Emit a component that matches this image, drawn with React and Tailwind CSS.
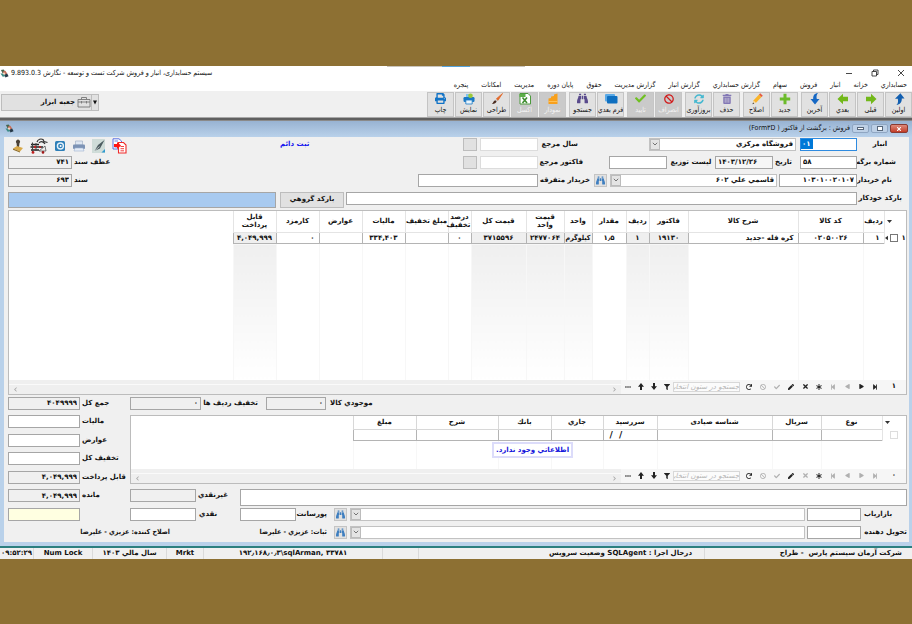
import {
  FaBinoculars, FaPrint, FaTrashAlt, FaSyncAlt, FaBan, FaCheck,
  FaStepForward, FaStepBackward, FaPlay, FaAsterisk, FaTimes, FaPen,
  FaRedo, FaFilter, FaEllipsisH, FaChevronDown,
} from "react-icons/fa";

const menus = [
  "حسابداري", "خزانه", "انبار", "فروش", "سهام", "گزارش حسابداري", "گزارش انبار",
  "گزارش مديريت", "حقوق", "پایان دوره", "مدیریت", "امكانات", "پنجره",
];

function CurvedArrow({ down }) {
  return (
    <svg viewBox="0 0 12 12" className="h-3 w-3">
      {down ? (
        <path d="M9 0 C5 0.6 4 3 4.2 6 H1.5 L6 11.5 L10.5 6 H7.8 C7.2 3.5 7.6 1.6 9 0Z" fill="#1668c4" />
      ) : (
        <path d="M3.4 12 C5.4 10.5 5.2 8 4.8 5.8 H2 L7.4 0.3 L11.5 5.4 H8.8 C9 8.8 7 11.5 3.4 12Z" fill="#125fb0" />
      )}
    </svg>
  );
}

function BlockArrow({ left }) {
  return (
    <svg viewBox="0 0 12 12" className={`h-3 w-3 ${left ? "rotate-180" : ""}`}>
      <path d="M1 3.8 H6 V0.8 L11.5 6 L6 11.2 V8.2 H1Z" fill="#72b81a" />
    </svg>
  );
}

function PlusIcon() {
  return (
    <svg viewBox="0 0 12 12" className="h-3 w-3">
      <path d="M4.5 0.8 H7.5 V4.5 H11.2 V7.5 H7.5 V11.2 H4.5 V7.5 H0.8 V4.5 H4.5Z" fill="#6cbb2b" />
    </svg>
  );
}

function PencilIcon() {
  return (
    <svg viewBox="0 0 12 12" className="h-3 w-3">
      <path d="M8 1.5 L10.5 4 L5 9.8 L2 10.5 L2.4 7.4Z" fill="#f9b42a" />
      <path d="M8 1.5 L9.2 0.3 L11.8 2.8 L10.5 4Z" fill="#e5573c" />
      <path d="M2 10.5 L2.4 7.4 L5 9.8Z" fill="#f3dcb4" />
      <path d="M1.4 11.2 L2.1 9.4 L3.2 10.4Z" fill="#333" />
    </svg>
  );
}

function ExcelIcon() {
  return (
    <svg viewBox="0 0 12 12" className="h-3 w-3">
      <path d="M1 0.5 H9 L11.5 3 V11 H1Z" fill="#fff" stroke="#4c9a3c" />
      <rect x="0.5" y="1" width="6" height="3" fill="#5cae48" />
      <path d="M3.5 4.5 L8 10 M8 4.5 L3.5 10" stroke="#3f8d30" strokeWidth="1.6" />
    </svg>
  );
}

function ChartIcon() {
  return (
    <svg viewBox="0 0 12 12" className="h-3 w-3">
      <path d="M1.5 5.5 L4 5 V3.5 L7 3 V1.5 L10.5 0.5 V11 H1.5Z" fill="#f8a01c" />
      <path d="M1.5 8.5 H10.5" stroke="#ffc864" strokeWidth="0.8" />
    </svg>
  );
}

function BrushIcon() {
  return (
    <svg viewBox="0 0 12 12" className="h-3 w-3">
      <path d="M11.5 0.5 L5.2 6 L6.8 7.6Z" fill="#e2682a" stroke="#e2682a" strokeWidth="0.8" />
      <path d="M5.2 6 L6.8 7.6 L5.6 8.6 L4.2 7.2Z" fill="#c9c9c9" />
      <path d="M4.2 7.2 L5.6 8.6 C5 10.5 3 11.2 0.8 11 C2.4 10 2.2 8 4.2 7.2Z" fill="#4a2c20" />
    </svg>
  );
}

function FormsIcon() {
  return (
    <svg viewBox="0 0 14 12" className="h-3 w-3.5">
      <rect x="1" y="1" width="10" height="7.5" rx="1" fill="#59a9e6" />
      <rect x="3" y="3" width="10.5" height="7.5" rx="1" fill="#0f6fc0" />
    </svg>
  );
}

function PreviewIcon() {
  return (
    <svg viewBox="0 0 12 12" className="h-3 w-3">
      <path d="M3 1 H9 V4 H3Z" fill="#7fc4ef" />
      <rect x="0.5" y="4" width="11" height="5" rx="1.2" fill="#1a78c4" />
      <path d="M2.8 7 H9.2 V11 H2.8Z" fill="#e8f4fc" stroke="#1a78c4" strokeWidth="0.8" />
      <circle cx="7.5" cy="2.8" r="2.3" fill="#9bc93a" />
    </svg>
  );
}

const toolGroups = [
  [
    { text: "اولین", icon: <CurvedArrow /> },
    { text: "قبلی", icon: <BlockArrow /> },
    { text: "بعدي", icon: <BlockArrow left /> },
    { text: "آخرین", icon: <CurvedArrow down /> },
  ],
  [
    { text: "جدید", icon: <PlusIcon /> },
    { text: "اصلاح", icon: <PencilIcon /> },
  ],
  [
    { text: "حذف", icon: <FaTrashAlt className="text-[#8277b5]" size={10} /> },
    { text: "بروزآوری", icon: <FaSyncAlt className="text-[#46b8d0]" size={10} /> },
  ],
  [
    { text: "انصراف", icon: <FaBan className="text-[#d01c1c]" size={10} />, off: true },
    { text: "تایید", icon: <FaCheck className="text-[#6fc021]" size={11} />, off: true },
  ],
  [
    { text: "فرم بعدي", icon: <FormsIcon /> },
    { text: "جستجو", icon: <FaBinoculars className="text-[#594a8c]" size={11} /> },
  ],
  [
    { text: "نمودار", icon: <ChartIcon />, off: true },
    { text: "اكسل", icon: <ExcelIcon />, off: true },
    { text: "طراحی", icon: <BrushIcon /> },
    { text: "نمایش", icon: <PreviewIcon /> },
    { text: "چاپ", icon: <FaPrint className="text-[#1173c6]" size={11} /> },
  ],
];

function ToolButton({ item }) {
  return (
    <button
      type="button"
      disabled={item.off}
      className={`flex h-[25px] w-[27px] flex-col items-center overflow-hidden whitespace-nowrap border text-[7px] leading-[10px] ${
        item.off ? "border-[#c6c6c6] bg-[#cacaca] text-[#f4f4f4]" : "border-[#c4c4c4] bg-[#e1e1e1] text-[#111]"
      }`}
    >
      <span className="flex h-3 items-center">{item.icon}</span>
      <span>{item.text}</span>
    </button>
  );
}

function AppLogo() {
  return (
    <svg viewBox="0 0 10 10" className="h-[9px] w-[9px] shrink-0">
      <path d="M1 1 L4 0.5 L6 3 L3 5Z" fill="#46644e" />
      <path d="M3 3 L6 2 L8 5 L5 7Z" fill="#c9705c" />
      <path d="M0.5 5 L4 5 L6 8 L3 8.5Z" fill="#3d8c86" />
      <path d="M5 6 L8 5 L9.5 8 L6 9.5Z" fill="#263948" />
      <path d="M3 4.5 L5 4 L6 6 L4 6.5Z" fill="#f0dcc8" />
    </svg>
  );
}

function Input({ id, value, className = "", ltr }) {
  return (
    <input
      id={id}
      type="text"
      dir={ltr ? "ltr" : "rtl"}
      defaultValue={value}
      className={`h-[13px] shrink-0 rounded-none border border-[#a6a6a6] px-0.5 leading-[11px] outline-none ${className}`}
    />
  );
}

function Label({ id, children, className = "" }) {
  return (
    <label htmlFor={id} className={`shrink-0 whitespace-nowrap ${className}`}>
      {children}
    </label>
  );
}

function Select({ id, value, label, className = "" }) {
  return (
    <div className={`relative h-[13px] border border-[#c2c2c2] bg-white ${className}`}>
      <select
        id={id}
        aria-label={label}
        className="block h-full w-full appearance-none bg-transparent pr-0.5 pl-3 leading-[11px] outline-none"
      >
        <option>{value}</option>
      </select>
      <span className="pointer-events-none absolute inset-y-0 left-0 flex w-2.5 items-center justify-center border border-[#bcbcbc] bg-[#e4e4e4] text-[#666]">
        <svg viewBox="0 0 6 4" className="h-1 w-1.5">
          <path d="M0.8 0.8 L3 3 L5.2 0.8" fill="none" stroke="currentColor" strokeWidth="0.9" />
        </svg>
      </span>
    </div>
  );
}

function FindButton({ label }) {
  return (
    <button
      type="button"
      aria-label={label}
      className="flex h-[13px] w-[13px] shrink-0 items-center justify-center border border-[#c4c4c4] bg-[#e1e1e1] text-[#3f7fc0]"
    >
      <FaBinoculars size={9} />
    </button>
  );
}

function DocIcons() {
  return (
    <div dir="ltr" className="mt-1 ml-1 flex h-4 items-center gap-1.5">
      <button type="button" aria-label="مهر">
        <svg viewBox="0 0 12 14" className="h-3.5 w-3">
          <path d="M4.5 4 A2 2 0 1 1 7.5 4 L7 8 H5Z" fill="#4a4136" />
          <path d="M1 9.5 L5 7 L11 9 L8 12.5Z" fill="#d8a94a" />
          <path d="M1 9.5 L8 12.5 V13.5 L1 10.8Z" fill="#8c6a24" />
        </svg>
      </button>
      <button type="button" aria-label="حمل">
        <svg viewBox="0 0 18 16" className="h-4 w-[18px]">
          <path d="M1 6.5 H9 M0.5 9 H13 M1 12 H9" stroke="#222" strokeWidth="1.3" />
          <path d="M2.5 4.5 V14 M6 5 V13" stroke="#444" strokeWidth="1" />
          <path d="M7 4 C8 1 11 0.5 13 1.5 L14 3.5 L17.5 4.5 M9 5 C11 2.5 14 4 15 6" fill="none" stroke="#333" strokeWidth="1.2" />
          <path d="M9 13 L15 8 L16 13Z" fill="#eee" stroke="#555" strokeWidth="0.8" />
          <circle cx="3" cy="14.4" r="1.4" fill="#c02020" />
          <circle cx="13" cy="14.4" r="1.3" fill="#a01818" />
          <circle cx="5" cy="9" r="1.2" fill="#c02020" />
          <circle cx="10" cy="9" r="1.1" fill="#c02020" />
        </svg>
      </button>
      <button type="button" aria-label="پشتیبان">
        <svg viewBox="0 0 12 12" className="h-3 w-3">
          <rect x="1" y="1" width="10" height="10" rx="1.5" fill="#2e7fb8" />
          <circle cx="6.4" cy="6" r="3" fill="none" stroke="#e4f1fa" strokeWidth="1.4" />
          <circle cx="6.6" cy="6" r="1" fill="#fff" />
        </svg>
      </button>
      <button type="button" aria-label="چاپ سند">
        <svg viewBox="0 0 14 12" className="h-3 w-3.5">
          <path d="M3.5 1 H10.5 V5 H3.5Z" fill="#dfe7f2" stroke="#9aa9c0" strokeWidth="0.6" />
          <rect x="1" y="4.6" width="12" height="4.4" rx="1" fill="#7d93b5" />
          <path d="M3 8 H11 L12 11 H2Z" fill="#e6edf7" stroke="#9fb3d1" strokeWidth="0.6" />
        </svg>
      </button>
      <button type="button" aria-label="امضا">
        <svg viewBox="0 0 14 14" className="h-3.5 w-3.5">
          <rect width="13" height="14" fill="#cfdcd8" />
          <path d="M12.5 1 L6 6 L2.5 12 L8 9.5 Z" fill="#4c5c60" />
          <path d="M2.5 12 L7.5 7.5" stroke="#fff" strokeWidth="0.6" />
          <path d="M9.5 13.5 L13 10 V13.5Z" fill="#2e9ad0" />
        </svg>
      </button>
      <button type="button" aria-label="خروجی">
        <svg viewBox="0 0 15 16" className="h-4 w-[15px]">
          <path d="M1 0.8 H7 L9.5 3 V11 H1Z" fill="#fff" stroke="#4a62e0" strokeWidth="0.9" />
          <path d="M2.5 3 H6 M2.5 9 H6" stroke="#4a62e0" strokeWidth="0.8" />
          <path d="M6.5 4.5 H11.5 L14 7 V15 H6.5Z" fill="#fff" stroke="#ef2b2b" strokeWidth="1.1" />
          <path d="M8.5 8.5 H12 M8.5 10.7 H12 M8.5 12.8 H12" stroke="#ef2b2b" strokeWidth="0.9" />
          <path d="M2 6 H5 V4 L9 7.5 L5 11 V9 H2Z" fill="#ff1414" />
        </svg>
      </button>
    </div>
  );
}

function SortMark() {
  return (
    <svg viewBox="0 0 5 3" className="ml-0.5 inline h-[3px] w-[5px]">
      <path d="M0 0 H5 L2.5 3Z" fill="#333" />
    </svg>
  );
}

const columns = [
  { title: "رديف", width: "w-[21px]", value: "۱" },
  { title: "كد كالا", width: "w-[65px]", value: "۰۲۰۵۰۰۲۶", center: true },
  { title: "شرح كالا", width: "w-[110px]", value: "كره فله -جدید" },
  { title: "فاكتور", width: "w-[39px]", value: "۱۹۱۳۰", center: true, gray: true },
  { title: "ردیف", width: "w-[23px]", value: "۱", center: true, gray: true },
  { title: "مقدار", width: "w-[34px]", value: "۱٫۵", center: true },
  { title: "واحد", width: "w-[28px]", value: "كيلوگرم", unit: true, gray: true },
  { title: "قیمت واحد", width: "w-[38px]", value: "۲۴۷۷۰۶۴", center: true, gray: true },
  { title: "قیمت كل", width: "w-[55px]", value: "۳۷۱۵۵۹۶", center: true, gray: true },
  { title: "درصد تخفیف", width: "w-[23px]", value: "۰", center: true },
  { title: "مبلغ تخفیف", width: "w-[43px]", value: "", nowrap: true },
  { title: "ماليات", width: "w-[43px]", value: "۳۳۴,۴۰۳", center: true },
  { title: "عوارض", width: "w-[43px]", value: "" },
  { title: "كارمزد", width: "w-[43px]", value: "۰" },
  { title: "قابل پرداخت", width: "w-[43px]", value: "۴,۰۴۹,۹۹۹", center: true, gray: true },
];

function ItemsTable() {
  return (
    <table className="w-full table-fixed border-collapse bg-white">
      <thead>
        <tr className="h-[22px]">
          <th className="w-[22px] border-l border-[#e4e4e4] text-left">
            <SortMark />
          </th>
          {columns.map((c, i) => (
            <th key={i} className={`border-l border-[#e4e4e4] leading-[8px] ${c.width} ${c.nowrap ? "whitespace-nowrap" : ""}`}>
              {c.title}
            </th>
          ))}
          <th></th>
        </tr>
      </thead>
      <tbody>
        <tr className="h-[11px]">
          <td className="border-l border-[#e4e4e4]">
            <div className="flex items-center justify-end gap-0.5">
              <span className="ml-0.5 leading-[10px]">۱</span>
              <input type="checkbox" aria-label="انتخاب ردیف ۱" className="h-2 w-2 appearance-none border border-[#777] bg-white" />
              <svg viewBox="0 0 4 6" className="h-1.5 w-[3px]"><path d="M4 0 L0 3 L4 6Z" fill="#333" /></svg>
            </div>
          </td>
          {columns.map((c, i) => (
            <td
              key={i}
              className={`overflow-hidden whitespace-nowrap border-t border-b border-l border-t-[#e4e4e4] border-b-[#b4b4b4] border-l-[#b4b4b4] leading-[9px] ${
                c.gray ? "bg-[#efefef]" : ""
              } ${
                c.center
                  ? "text-center"
                  : c.unit
                  ? "text-center font-['DejaVu_Sans_Condensed','DejaVu_Sans',sans-serif]"
                  : "px-1 text-right"
              }`}
            >
              {c.value}
            </td>
          ))}
          <td></td>
        </tr>
        <tr className="h-[136px]">
          <td></td>
          {columns.map((c, i) => (
            <td key={i} className={`border-l border-[#f7f7f7] ${c.gray ? "bg-linear-to-b from-[#efefef] to-white" : ""}`}></td>
          ))}
          <td></td>
        </tr>
      </tbody>
    </table>
  );
}

function SmallArrow({ up }) {
  return (
    <svg viewBox="0 0 6 7" className={`h-[7px] w-1.5 ${up ? "rotate-180" : ""}`}>
      <path d="M2 0 H4 V3.2 H6 L3 7 L0 3.2 H2Z" fill="currentColor" />
    </svg>
  );
}

function NavBar({ count, active, id }) {
  const on = "text-[#222]";
  const off = "text-[#b0b0b0]";
  const nav = active ? on : off;
  const btn = "flex w-3.5 shrink-0 items-center justify-center";
  const sideBtn = "flex w-[13px] shrink-0 items-center justify-center text-[#222]";
  return (
    <div className="flex h-[14px] bg-[#efefef]">
      <div className="flex shrink-0 items-center bg-[#f6f6f6]">
        <span className="w-6 shrink-0 text-center">{count}</span>
        <button type="button" aria-label="آخرین رکورد" className={`${btn} ${nav}`}><FaStepForward size={6} /></button>
        <button type="button" aria-label="رکورد بعد" className={`${btn} ${nav}`}><FaPlay size={5} /></button>
        <button type="button" aria-label="رکورد قبل" className={`${btn} ${off}`}><FaPlay size={5} className="rotate-180" /></button>
        <button type="button" aria-label="اولین رکورد" className={`${btn} ${off}`}><FaStepBackward size={6} /></button>
        <button type="button" aria-label="افزودن" className={`${btn} ${on}`}><FaAsterisk size={6} /></button>
        <button type="button" aria-label="حذف" className={`${btn} ${nav}`}><FaTimes size={7} /></button>
        <button type="button" aria-label="ویرایش" className={`${btn} ${on}`}><FaPen size={6} /></button>
        <button type="button" aria-label="ثبت" className={`${btn} ${off}`}><FaCheck size={6} /></button>
        <button type="button" aria-label="لغو" className={`${btn} ${off}`}><FaBan size={6} /></button>
        <button type="button" aria-label="تازه‌سازی" className={`${btn} ${on}`}><FaRedo size={6} /></button>
        <input
          id={id}
          type="text"
          aria-label="جستجو"
          placeholder="جستجو در ستون انتخابی"
          className="mr-0.5 h-[10px] w-[67px] shrink-0 border border-[#d8d8d8] bg-[#fbfbfb] text-[7px] font-normal italic leading-[8px] placeholder-[#b5b5b5] outline-none"
        />
        <button type="button" aria-label="فیلتر" className={sideBtn}><FaFilter size={6} /></button>
        <button type="button" aria-label="پایین" className={sideBtn}><SmallArrow /></button>
        <button type="button" aria-label="بالا" className={sideBtn}><SmallArrow up /></button>
        <button type="button" aria-label="بیشتر" className={sideBtn}><FaEllipsisH size={6} /></button>
      </div>
      <div className="mt-1 flex flex-1 items-center justify-between border-t border-[#fafafa] px-1 text-[#a8a8a8]">
        <FaChevronDown size={5} className="-rotate-90" />
        <FaChevronDown size={5} className="rotate-90" />
      </div>
    </div>
  );
}

const payColumns = [
  { title: "نوع", width: "w-[61px]" },
  { title: "سریال", width: "w-[49px]" },
  { title: "شناسه صیادی", width: "w-[115px]" },
  { title: "سررسيد", width: "w-[54px]", value: "/  /" },
  { title: "جاري", width: "w-[52px]" },
  { title: "بانك", width: "w-[53px]" },
  { title: "شرح", width: "w-[82px]" },
  { title: "مبلغ", width: "w-[63px]" },
];

function PaymentsTable() {
  return (
    <div className="relative">
      <table className="w-full table-fixed border-collapse bg-white">
        <thead>
          <tr className="h-[14px]">
            <th className="w-[24px] border-l border-[#e4e4e4] text-left"><SortMark /></th>
            {payColumns.map((c) => (
              <th key={c.title} className={`border-l border-[#d8d8d8] leading-[10px] ${c.width}`}>{c.title}</th>
            ))}
            <th></th>
          </tr>
        </thead>
        <tbody>
          <tr className="h-[11px]">
            <td className="border-l border-[#e4e4e4]">
              <input type="checkbox" aria-label="انتخاب" className="mx-auto block h-2 w-2 appearance-none border border-[#ddd] bg-white" />
            </td>
            {payColumns.map((c) => (
              <td key={c.title} className="border-t border-b border-l border-t-[#d8d8d8] border-b-[#b4b4b4] border-l-[#b4b4b4] pl-1.5 text-left text-[9px] leading-[9px] whitespace-pre">
                {c.value}
              </td>
            ))}
            <td></td>
          </tr>
          <tr className="h-[28px]">
            <td></td>
            {payColumns.map((c) => <td key={c.title} className="border-l border-[#f7f7f7]"></td>)}
            <td></td>
          </tr>
        </tbody>
      </table>
      <p className="absolute top-[26px] left-[361px] border-2 border-[#dcdcfa] bg-white px-0.5 leading-[12px] whitespace-nowrap text-[#1414dc]">
        اطلاعاتي وجود ندارد.
      </p>
    </div>
  );
}

const totals = [
  { id: "sum", label: "جمع كل", value: "۴۰۴۹۹۹۹", tint: "bg-[#f0f0f0]" },
  { id: "tax", label: "ماليات", tint: "bg-white" },
  { id: "duty", label: "عوارض", tint: "bg-white" },
  { id: "discount", label: "تخفيف كل", tint: "bg-white" },
  { id: "payable", label: "قابل پرداخت", value: "۴,۰۴۹,۹۹۹", tint: "bg-[#f0f0f0]" },
  { id: "remain", label: "مانده", value: "۴,۰۴۹,۹۹۹", tint: "bg-[#f0f0f0]" },
  { id: "note", label: "", tint: "bg-[#ffffe1]" },
];

function HeaderForm() {
  return (
    <form className="flex flex-col gap-[5px] pt-px pr-[5px] pl-1">
      <div className="flex h-[13px] items-center">
        <Label id="store" className="w-[47px] pr-1 pl-1 text-left">
          <span className="ml-px inline-block w-9 text-center">انبار</span>
        </Label>
        <div className="flex h-[13px] w-[57px] shrink-0 items-center justify-end border border-[#2f8be0] bg-white">
          <input id="store" dir="ltr" defaultValue="۰۱" className="w-3 bg-[#0078d7] px-px leading-[10px] text-white outline-none" />
        </div>
        <Select id="storeName" label="نام انبار" value="فروشگاه مركزي" className="mr-1 w-[147px] shrink-0" />
        <Label id="refYear" className="mr-[71px] w-[40px]">سال مرجع</Label>
        <Input id="refYear" className="w-[58px] border-[#dcdcdc] bg-white" />
        <button type="button" aria-label="انتخاب سال" className="mr-[3px] h-[13px] w-3.5 shrink-0 border border-[#bdbdbd] bg-[#e1e1e1]"></button>
        <div className="flex-1"></div>
        <a href="#" className="ml-[153px] shrink-0 text-[#1414ee]">ثبت دائم</a>
        <DocIcons />
      </div>
      <div className="flex h-[13px] items-center">
        <Label id="sheet" className="w-[47px] pr-2">شماره برگه</Label>
        <Input id="sheet" value="۵۸" ltr className="w-[57px] bg-white" />
        <Label id="date" className="w-[27px] pl-0.5 text-left">تاریخ</Label>
        <Input id="date" value="۱۴۰۳/۱۲/۲۶" ltr className="w-[58px] bg-[#f6f6f6]" />
        <Label id="dist" className="w-[48px] text-center">ليست توزيع</Label>
        <Input id="dist" className="w-[58px] bg-white" />
        <Label id="refInv" className="mr-[26px] w-[45px]">فاكتور مرجع</Label>
        <Input id="refInv" className="w-[58px] border-[#dcdcdc] bg-white" />
        <button type="button" aria-label="انتخاب فاکتور" className="mr-[3px] h-[13px] w-3.5 shrink-0 border border-[#bdbdbd] bg-[#e1e1e1]"></button>
        <div className="flex-1"></div>
        <Label id="docRef" className="ml-0.5">عطف سند</Label>
        <Input id="docRef" value="۷۴۱" className="w-16 bg-[#f0f0f0]" />
      </div>
      <div className="flex h-[13px] items-center">
        <Label id="buyer" className="w-[47px] pr-3">نام خريدار</Label>
        <Input id="buyer" value="۱۰۳۰۱۰۰۲۰۱۰۷" className="w-[78px] bg-white" />
        <Select id="buyerName" label="نام خریدار" value="قاسمي علي ۶۰۲" className="mr-0.5 w-[167px] shrink-0" />
        <div className="mr-[3px]"><FindButton label="جستجوی خریدار" /></div>
        <Label id="misc" className="mr-1 w-[52px]">خریدار متفرقه</Label>
        <Input id="misc" className="w-[120px] bg-white" />
        <div className="flex-1"></div>
        <Label id="doc" className="ml-0.5">سند</Label>
        <Input id="doc" value="۶۹۳" className="w-16 bg-[#f0f0f0]" />
      </div>
      <div className="flex h-[16px] items-start">
        <Label id="barcode" className="w-[47px] pr-0.5 leading-[13px]">باركد خودكار</Label>
        <Input id="barcode" className="flex-1 bg-white" />
        <button type="button" className="mr-0.5 h-[16px] w-16 shrink-0 border border-[#bdbdbd] bg-[#e1e1e1]">باركد گروهي</button>
        <input type="text" aria-label="بارکد" className="mr-1 h-[16px] w-[268px] shrink-0 border border-[#a6a6a6] bg-[#a8caf0] outline-none" />
      </div>
    </form>
  );
}

function StatusBar() {
  const cell = "shrink-0 border-r border-[#dadada] text-center whitespace-nowrap";
  return (
    <footer className="flex h-[11px] items-center bg-[#f0f0f0] leading-[11px]">
      <span className="w-[207px] shrink-0 pr-2.5">شركت آرمان سيستم پارس&nbsp; - طراح</span>
      <span className="flex-1 border-r border-[#dadada] pr-3">درحال اجرا : SQLAgent وضعيت سرويس</span>
      <span className={`${cell} h-full w-9`}></span>
      <span dir="ltr" className={`${cell} w-[179px]`}>۱۹۲٫۱۶۸٫۰٫۳\sqlArman, ۳۳۷۸۱</span>
      <span className={`${cell} w-[37px]`}>Mrkt</span>
      <span className={`${cell} w-[74px]`}>سال مالي ۱۴۰۳</span>
      <span className={`${cell} w-[59px]`}>Num Lock</span>
      <span className={`${cell} w-[34px]`}>۰۹:۵۲:۲۹</span>
    </footer>
  );
}

export default function App() {
  return (
    <div className="flex min-h-screen flex-col justify-center bg-[#8d7033]">
      <div dir="rtl" className="bg-[#f0f0f0] font-['DejaVu_Sans',sans-serif] text-[7px] font-bold text-[#111]">
        <header className="bg-white font-['DejaVu_Sans_Condensed','DejaVu_Sans',sans-serif] font-normal">
          <div className="flex h-px justify-center">
            <span className="w-[55px] bg-[#c9c4bb]"></span>
            <span className="w-7 bg-[#55a3dc]"></span>
            <span className="w-[55px] bg-[#c9c4bb]"></span>
          </div>
          <div className="flex h-[13px] items-center">
            <div className="flex items-center gap-4 pr-[7px] text-[#333]">
              <button type="button" aria-label="بستن">
                <svg viewBox="0 0 8 8" className="h-2 w-2"><path d="M1 1 L7 7 M7 1 L1 7" stroke="currentColor" strokeWidth="0.9" /></svg>
              </button>
              <button type="button" aria-label="بازگرداندن" className="pr-0.5">
                <svg viewBox="0 0 8 8" className="h-2 w-2"><path d="M1 2.5 H5.5 V7 H1Z M2.5 2.5 V1 H7 V5.5 H5.5" fill="none" stroke="currentColor" strokeWidth="0.9" /></svg>
              </button>
              <button type="button" aria-label="کوچک کردن" className="pr-0.5">
                <svg viewBox="0 0 8 8" className="h-2 w-2"><path d="M1 4.5 H7" stroke="currentColor" strokeWidth="0.9" /></svg>
              </button>
            </div>
            <h1 className="mr-auto ml-0.5">سیستم حسابداری، انبار و فروش شرکت تست و توسعه - نگارش 9.893.0.3</h1>
            <AppLogo />
          </div>
          <nav className="flex h-[11px] items-center gap-[13px] pr-[5px] leading-[11px]">
            {menus.map((m) => (
              <a key={m} href="#" className="whitespace-nowrap">{m}</a>
            ))}
          </nav>
        </header>

        <div className="flex items-center justify-between pt-px">
          <div className="flex gap-[3px] font-['DejaVu_Sans_Condensed','DejaVu_Sans',sans-serif] font-normal">
            {toolGroups.map((g, i) => (
              <div key={i} className="flex gap-px">
                {g.map((t) => <ToolButton key={t.text} item={t} />)}
              </div>
            ))}
          </div>
          <button type="button" className="mb-1 ml-px flex h-[17px] w-[98px] items-center border border-[#bdbdbd] bg-[#e1e1e1]">
            <span className="flex h-full w-[7px] items-center justify-center border-l border-[#bdbdbd]">
              <svg viewBox="0 0 5 5" className="h-[5px] w-1"><path d="M0 0 H5 L2.5 5Z" fill="#111" /></svg>
            </span>
            <svg viewBox="0 0 14 12" className="h-3 w-3.5">
              <path d="M1 3.5 H13 V11 H1Z M4.5 3.5 V1.5 H9.5 V3.5 M1 6 H13 M4.5 5 V7.5 M9.5 5 V7.5" fill="none" stroke="#777" strokeWidth="0.9" />
            </svg>
            <span className="mr-0.5">جعبه ابزار</span>
          </button>
        </div>
        <div className="h-1 border-t border-b border-t-[#a8a8a8] border-b-[#8a8a8a] bg-[#606060]"></div>

        <section className="bg-[#b9d1ea] pb-1">
          <div className="flex h-4 items-center bg-linear-to-b from-[#98b3d2] to-[#b9d1ea] pr-1 pl-[5px] font-['DejaVu_Sans_Condensed','DejaVu_Sans',sans-serif] font-normal">
            <button type="button" aria-label="بستن فرم" className="flex h-[9px] w-[18px] items-center justify-center rounded-xs border border-[#8a3a32] bg-linear-to-b from-[#dd8a7c] to-[#c23a26] text-white">
              <FaTimes size={6} />
            </button>
            <button type="button" aria-label="بزرگ کردن فرم" className="mr-0.5 flex h-[9px] w-[17px] items-center justify-center rounded-xs border border-[#8fa6c2] bg-[#bdd0e6]">
              <span className="h-[5px] w-1.5 border border-[#57677a] bg-white"></span>
            </button>
            <button type="button" aria-label="کوچک کردن فرم" className="mr-0.5 flex h-[9px] w-[17px] items-center justify-center rounded-xs border border-[#8fa6c2] bg-[#bdd0e6]">
              <span className="h-[3px] w-[7px] border border-[#57677a] bg-white"></span>
            </button>
            <h2 className="mr-0.5">فروش : برگشت از فاكتور ( Form۳D)</h2>
            <div className="mr-auto"><AppLogo /></div>
          </div>

          <div className="mr-[3px] ml-1 bg-[#f0f0f0] pb-[3px]">
            <HeaderForm />

            <div className="mt-0.5 mr-0.5 ml-1 border border-[#bcbcbc]">
              <ItemsTable />
              <NavBar id="search-items" count="۱" active />
            </div>

            <div className="mt-0.5 flex pr-0.5 pl-1">
              <div className="min-w-0 flex-1">
                <div className="flex h-[13px] items-center justify-end">
                  <Label id="stock" className="ml-1">موجودي كالا</Label>
                  <Input id="stock" value="۰" className="w-[60px] bg-[#f0f0f0]" />
                  <Label id="rowDisc" className="mr-2 w-[57px]">تخفيف رديف ها</Label>
                  <Input id="rowDisc" value="۰" className="w-[71px] bg-[#f0f0f0]" />
                </div>
                <div className="mt-[5px] border border-[#bcbcbc]">
                  <PaymentsTable />
                  <NavBar id="search-payments" count="۰" />
                </div>
                <div className="mt-[5px] flex items-start">
                  <textarea aria-label="توضیحات" className="block h-[17px] flex-1 resize-none border border-[#a6a6a6] bg-white outline-none"></textarea>
                  <Label id="nonCash" className="mr-3 w-8 leading-[13px]">غيرنقدي</Label>
                  <Input id="nonCash" className="w-[66px] bg-[#f0f0f0]" />
                </div>
                <div className="mt-0.5 flex h-[13px] items-center">
                  <Label id="marketer" className="w-[46px] pl-[3px] text-left">بازارياب</Label>
                  <Input id="marketer" className="w-[54px] bg-white" />
                  <Select id="marketerName" label="نام بازاریاب" value="" className="mr-0.5 flex-1" />
                  <div className="mr-[3px]"><FindButton label="جستجوی بازاریاب" /></div>
                  <Label id="commission" className="mr-[7px] w-[31px]">پورسانت</Label>
                  <Input id="commission" className="w-[56px] bg-white" />
                  <Label id="cash" className="mr-3 w-8 pl-[3px] text-left">نقدي</Label>
                  <Input id="cash" className="w-[66px] bg-white" />
                </div>
              </div>

              <div className="flex w-[122px] shrink-0 flex-col justify-between">
                {totals.map((t) => (
                  <div key={t.id} className="flex h-[13px] items-center justify-end">
                    <Label id={t.id} className="ml-0.5">{t.label}</Label>
                    <Input id={t.id} value={t.value} className={`w-[72px] ${t.tint}`} />
                  </div>
                ))}
              </div>
            </div>

            <div className="mt-[5px] flex h-[13px] items-center pr-0.5">
              <Label id="courier" className="w-[46px]">تحويل دهنده</Label>
              <Input id="courier" className="w-[54px] bg-white" />
              <Select id="courierName" label="نام تحویل دهنده" value="" className="mr-0.5 flex-1" />
              <div className="mr-[3px]"><FindButton label="جستجوی تحویل دهنده" /></div>
              <div className="mr-[7px] flex shrink-0 font-['DejaVu_Sans_Condensed','DejaVu_Sans',sans-serif]">
                <span className="w-[157px]">ثبات: عزيزي - عليرضا</span>
                <span className="w-[166px]">اصلاح كننده: عزيزي - عليرضا</span>
              </div>
            </div>
          </div>
        </section>
        <div className="h-0.5 bg-[#2b7f80]"></div>
        <StatusBar />
      </div>
    </div>
  );
}
